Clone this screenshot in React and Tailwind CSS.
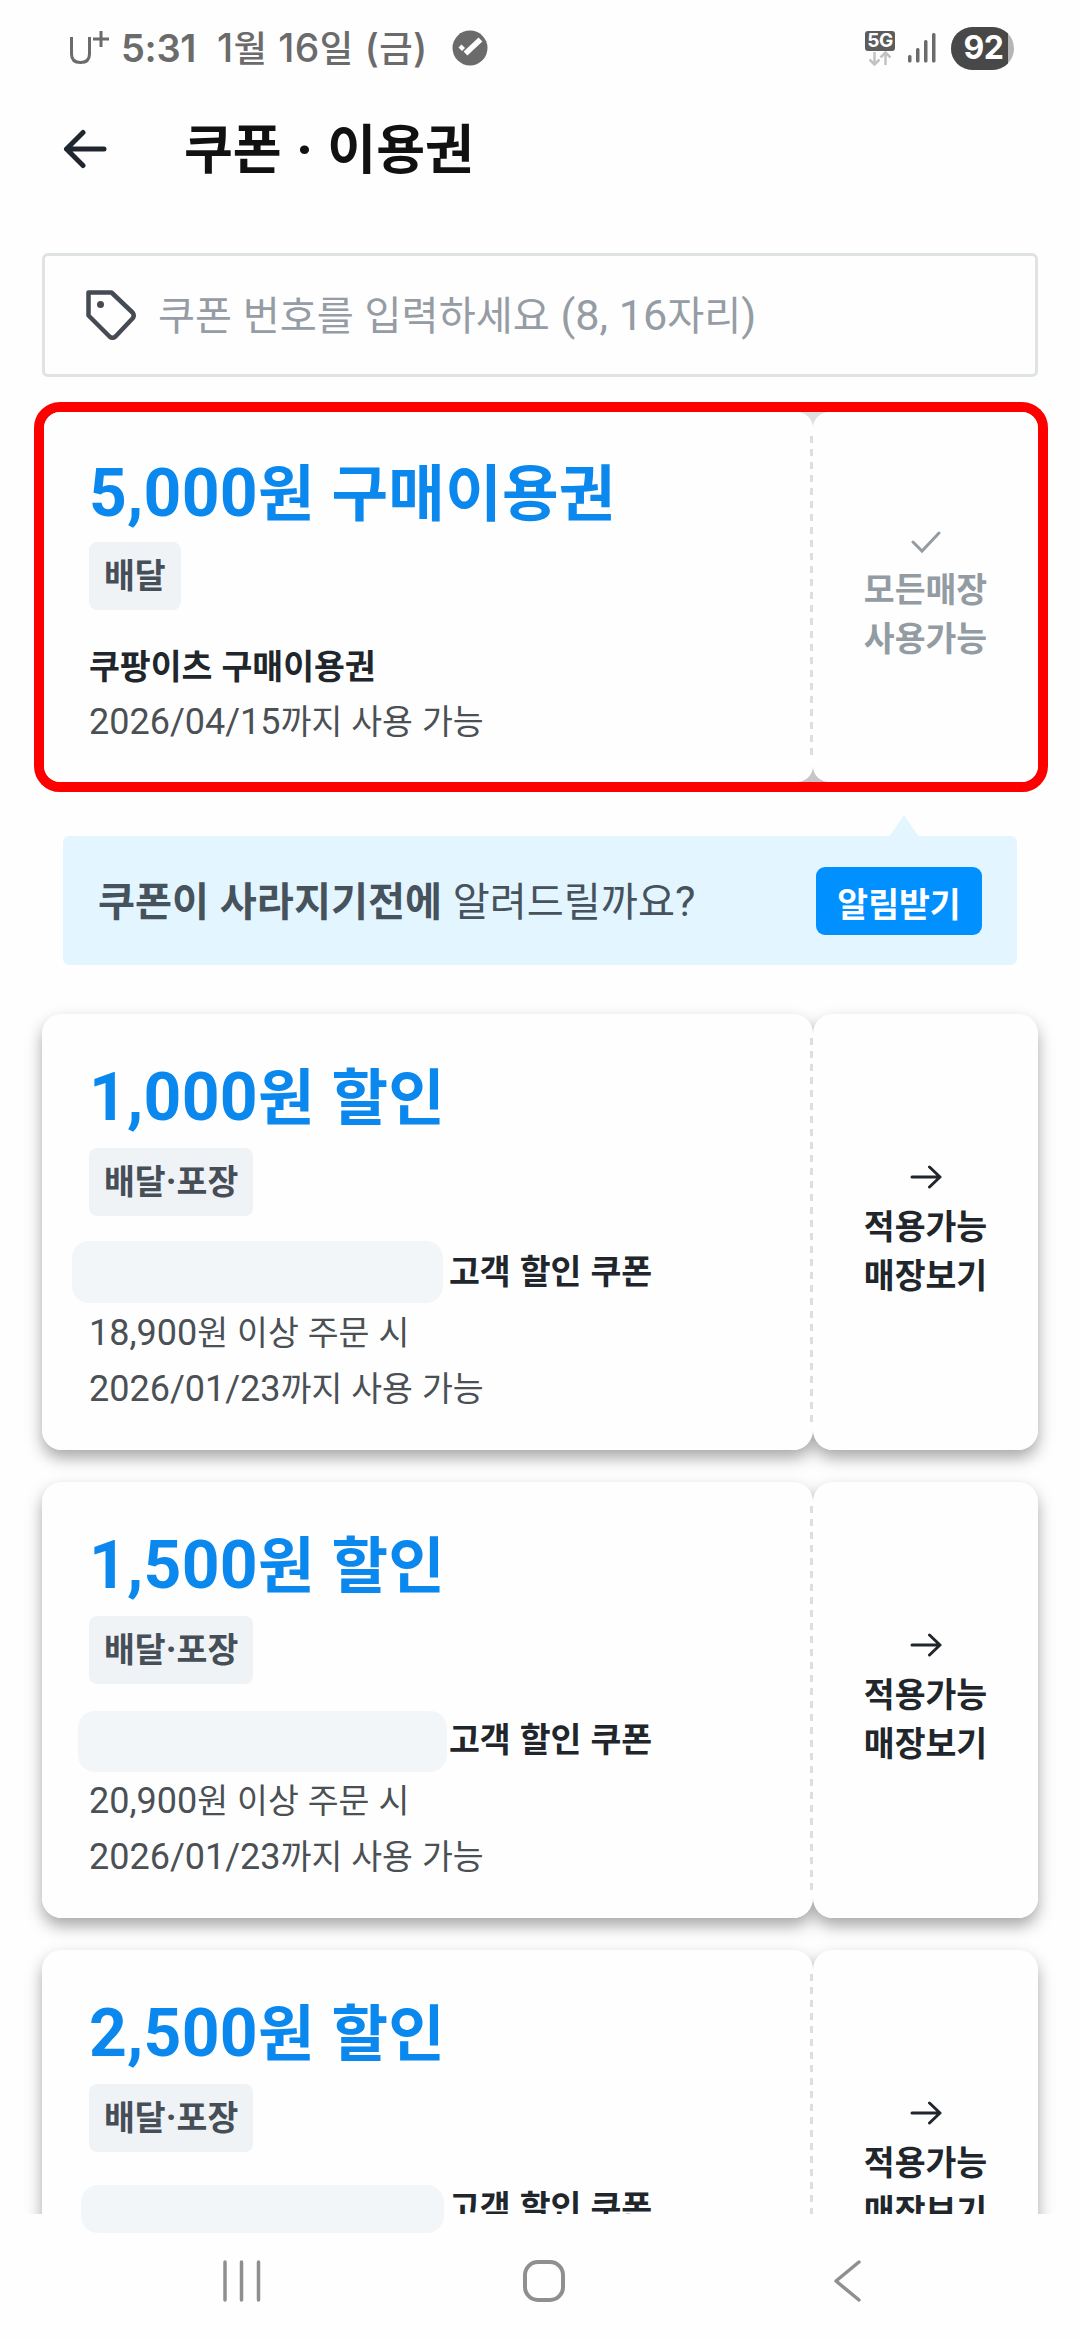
import React from "react";

// Hangul is set slightly smaller than the Latin digits next to it
const Ko = ({ children }) => (
  <>
    {children.split(/([가-힣]+)/).map((part, index) =>
      index % 2 ? (
        <span key={index} className="text-[0.932em]">
          {part}
        </span>
      ) : (
        part
      )
    )}
  </>
);

const coupons = [
  { amount: "1,000원 할인", minimum: "18,900원 이상 주문 시", mask: "-left-[17px] -top-[7px] w-[371px] h-[62px]" },
  { amount: "1,500원 할인", minimum: "20,900원 이상 주문 시", mask: "-left-[11px] -top-[5px] w-[369px] h-[61px]" },
  { amount: "2,500원 할인", minimum: "22,900원 이상 주문 시", mask: "-left-[8px] top-px w-[363px] h-[48px]" },
];

const StatusBar = () => (
  <div className="flex h-[96px] items-center justify-between pl-[69px] pr-[66px] text-[#6b6b6b]">
    <div className="flex items-center font-['Inter','Noto_Sans_CJK_KR',sans-serif] text-[38px] leading-[48px]">
      <svg width="42" height="36" viewBox="0 0 42 36" fill="none" stroke="currentColor" strokeWidth="3">
        <path d="M2.500 7V24Q2.500 32.500 11.500 32.500T20.500 24V7" />
        <path d="M32 1V17M24 9H40" />
      </svg>
      <span className="ml-[10px] w-[96px] font-semibold tracking-[-0.3px]">5:31</span>
      <span className="w-[235px] whitespace-nowrap text-[39px] font-medium tracking-[0.4px]">
        <Ko>1월 16일 (금)</Ko>
      </span>
      <svg width="36" height="36" viewBox="0 0 36 36">
        <circle cx="18" cy="18" r="17.500" fill="currentColor" />
        <path d="M6.500 17.500L9.500 14.500L13 18L10 21Z" fill="#fff" />
        <path d="M13.500 23.500L28.500 9.500" stroke="#fff" strokeWidth="5.500" />
      </svg>
    </div>
    <div className="flex items-center">
      <div className="flex w-[30px] flex-col items-center">
        <span className="flex h-[20px] w-[30px] items-center justify-center rounded-[3px] bg-[#5c5c5c] font-['Inter',sans-serif] text-[19px] font-bold leading-[20px] tracking-[-0.5px] text-white">
          5G
        </span>
        <svg width="24" height="15" viewBox="0 0 24 15" fill="none" stroke="#c2c2c2" strokeWidth="2.500">
          <path d="M6.500 1V13M1.500 8.500L6.500 13.500L11.500 8.500" />
          <path d="M17.500 14V2M12.500 6.500L17.500 1.500L22.500 6.500" />
        </svg>
      </div>
      <svg className="ml-[12px]" width="30" height="30" viewBox="0 0 30 30" fill="#6b6b6b">
        <rect x="1" y="22" width="3.500" height="7.500" rx="1.500" />
        <rect x="9" y="15" width="3.500" height="14.500" rx="1.500" />
        <rect x="17" y="7" width="3.500" height="22.500" rx="1.500" />
        <rect x="25" y="0" width="3.500" height="29.500" rx="1.500" />
      </svg>
      <div className="ml-[14px] flex h-[43px] w-[63px] overflow-hidden rounded-[22px] bg-[#b5b5b5]">
        <span className="flex w-[57px] items-center justify-center bg-[#484848] pl-[8px] font-['Inter',sans-serif] text-[32px] font-bold leading-[42px] tracking-[-0.5px] text-white">
          92
        </span>
      </div>
    </div>
  </div>
);

const Header = () => (
  <header className="flex h-[106px] items-center pl-[63px]">
    <svg width="44" height="40" viewBox="0 0 44 40" fill="none" stroke="#20262e" strokeWidth="5" strokeLinecap="round" strokeLinejoin="round">
      <path d="M20 3.500L3.500 20L20 36.500M3.500 20H41" />
    </svg>
    <h1 className="ml-[77px] mt-[2px] whitespace-nowrap text-[57px] font-bold leading-[70px] text-[#111]">
      <Ko>쿠폰 · 이용권</Ko>
    </h1>
  </header>
);

const CouponInput = () => (
  <div className="mx-[42px] mt-[51px] flex h-[124px] items-center rounded-[6px] border-[3px] border-[#dfe3e4] pl-[40px]">
    <svg width="52" height="52" viewBox="0 0 52 52" fill="none" stroke="#454b52" strokeWidth="4.500" strokeLinejoin="round">
      <path d="M3.500 3.500H26.500L47.500 23.500Q50 26.500 47.500 29.500L30.500 47.500Q27.500 50 24.500 47.500L3.500 26.500Z" />
      <circle cx="15.500" cy="15.500" r="3.500" fill="#454b52" stroke="none" />
    </svg>
    <span className="ml-[21px] mt-[3px] whitespace-nowrap text-[43.200px] leading-[56px] text-[#959ca4]">
      <Ko>쿠폰 번호를 입력하세요 (8, 16자리)</Ko>
    </span>
  </div>
);

const Divider = () => (
  <div className="absolute bottom-[24px] right-0 top-[24px] w-[3px] bg-[repeating-linear-gradient(to_bottom,#dedede_0px,#dedede_7px,transparent_7px,transparent_13px)]" />
);

const Badge = ({ children }) => (
  <span className="flex h-[68px] w-fit items-center rounded-[8px] bg-[#f0f3f6] px-[15px] text-[36px] font-bold leading-[44px] text-[#464e58]">
    <span>
      <Ko>{children}</Ko>
    </span>
  </span>
);

const SideLabel = ({ lines }) => (
  <div className="text-center text-[36px] font-bold leading-[48px]">
    {lines.map((line) => (
      <p key={line}>
        <Ko>{line}</Ko>
      </p>
    ))}
  </div>
);

const VoucherCard = () => (
  <section className="ml-[34px] mr-[32px] mt-[25px] flex h-[390px] rounded-[26px] border-[10px] border-[#fd0000] bg-[linear-gradient(to_bottom,#e0e0e0,#c6c6c6)]">
    <div className="relative w-[769px] rounded-[16px] bg-[#fefefe] pl-[45px] pt-[42px]">
      <h2 className="whitespace-nowrap text-[66px] font-bold leading-[80px] tracking-[0.25px] text-[#0a88ee]">
        <Ko>5,000원 구매이용권</Ko>
      </h2>
      <div className="mt-[7px]">
        <Badge>배달</Badge>
      </div>
      <p className="mt-[30px] text-[36px] font-bold leading-[55px] text-[#20262b]">
        <Ko>쿠팡이츠 구매이용권</Ko>
      </p>
      <p className="text-[36px] leading-[55px] text-[#4b5055]">
        <Ko>2026/04/15까지 사용 가능</Ko>
      </p>
      <Divider />
    </div>
    <div className="flex flex-1 flex-col items-center gap-[12px] rounded-[16px] bg-[#fefefe] pt-[118px] text-[#939ba3]">
      <svg width="30" height="24" viewBox="0 0 30 24" fill="none" stroke="currentColor" strokeWidth="3" strokeLinecap="round">
        <path d="M2 12L11 21L28 3" />
      </svg>
      <SideLabel lines={["모든매장", "사용가능"]} />
    </div>
  </section>
);

const NoticeBanner = () => (
  <div className="relative mx-[63px] mt-[44px] flex h-[129px] items-center justify-between rounded-[6px] bg-[#e3f5fe] pl-[35px] pr-[35px]">
    <svg className="absolute -top-[21px] left-[826px]" width="30" height="22" viewBox="0 0 30 22" fill="#e3f5fe">
      <path d="M0 22L15 0L30 22Z" />
    </svg>
    <p className="mt-[3px] whitespace-nowrap text-[43.200px] leading-[56px] text-[#46525c]">
      <b>
        <Ko>쿠폰이 사라지기전에</Ko>
      </b>{" "}
      <Ko>알려드릴까요?</Ko>
    </p>
    <button className="h-[68px] w-[166px] rounded-[9px] bg-[#0090ff] pt-[8px] text-[36px] font-bold leading-[60px] text-white">
      <Ko>알림받기</Ko>
    </button>
  </div>
);

const CouponCard = ({ coupon }) => (
  <section className="relative flex h-[436px] shrink-0">
    {/* Shadows stay behind both halves so the seam is clean */}
    <span className="absolute inset-y-0 left-0 w-[771px] rounded-[20px] shadow-[0_8px_16px_rgba(0,0,0,0.34)]" />
    <span className="absolute inset-y-0 right-0 w-[225px] rounded-[20px] shadow-[0_8px_16px_rgba(0,0,0,0.34)]" />
    <div className="relative w-[771px] rounded-[20px] bg-[#fefefe] pl-[47px] pt-[44px]">
      <h2 className="whitespace-nowrap text-[66px] font-bold leading-[80px] tracking-[0.25px] text-[#0a88ee]">
        <Ko>{coupon.amount}</Ko>
      </h2>
      <div className="mt-[9px]">
        <Badge>배달·포장</Badge>
      </div>
      <div className="relative mt-[32px] h-[48px] pl-[360px]">
        <span className={`absolute z-10 rounded-[17px] bg-[#f2f6f9] ${coupon.mask}`} />
        <p className="whitespace-nowrap text-[36px] font-bold leading-[48px] text-[#20262b]">
          <Ko>고객 할인 쿠폰</Ko>
        </p>
      </div>
      <p className="mt-[9px] text-[36px] leading-[56px] text-[#4b5055]">
        <Ko>{coupon.minimum}</Ko>
      </p>
      <p className="text-[36px] leading-[55px] text-[#4b5055]">
        <Ko>2026/01/23까지 사용 가능</Ko>
      </p>
      <Divider />
    </div>
    <div className="relative flex flex-1 flex-col items-center gap-[14px] rounded-[20px] bg-[#fefefe] pt-[151px] text-[#20262b]">
      <svg width="32" height="24" viewBox="0 0 32 24" fill="none" stroke="currentColor" strokeWidth="3" strokeLinecap="round" strokeLinejoin="round">
        <path d="M2 12H30M19.500 2L30 12L19.500 22" />
      </svg>
      <SideLabel lines={["적용가능", "매장보기"]} />
    </div>
  </section>
);

const NavBar = () => (
  <nav className="relative flex h-[126px] shrink-0 items-start bg-[#fefefe] pl-[222px] pt-[45px]">
    <svg width="40" height="44" viewBox="0 0 40 44" stroke="#8f8f8f" strokeWidth="3.500" strokeLinecap="round">
      <path d="M3 3V41M19.500 3V41M36.500 3V41" />
    </svg>
    <svg className="ml-[260px]" width="44" height="44" viewBox="0 0 44 44" fill="none" stroke="#8f8f8f" strokeWidth="4">
      <rect x="3" y="3" width="38" height="38" rx="13" />
    </svg>
    <svg className="ml-[266px]" width="30" height="44" viewBox="0 0 30 44" fill="none" stroke="#8f8f8f" strokeWidth="3.500" strokeLinecap="round" strokeLinejoin="round">
      <path d="M27 3L4 22L27 41" />
    </svg>
  </nav>
);

const App = () => {
  return (
    <div className="flex h-[2340px] w-[1080px] flex-col overflow-hidden bg-[#fefefe] font-['Roboto','Noto_Sans_CJK_KR',sans-serif]">
      <div className="h-[2214px] shrink-0">
        <StatusBar />
        <Header />
        <CouponInput />
        <VoucherCard />
        <NoticeBanner />
        <main className="mx-[42px] mt-[49px] flex flex-col gap-[32px]">
          {coupons.map((coupon) => (
            <CouponCard key={coupon.amount} coupon={coupon} />
          ))}
        </main>
      </div>
      <NavBar />
    </div>
  );
};

export default App;
